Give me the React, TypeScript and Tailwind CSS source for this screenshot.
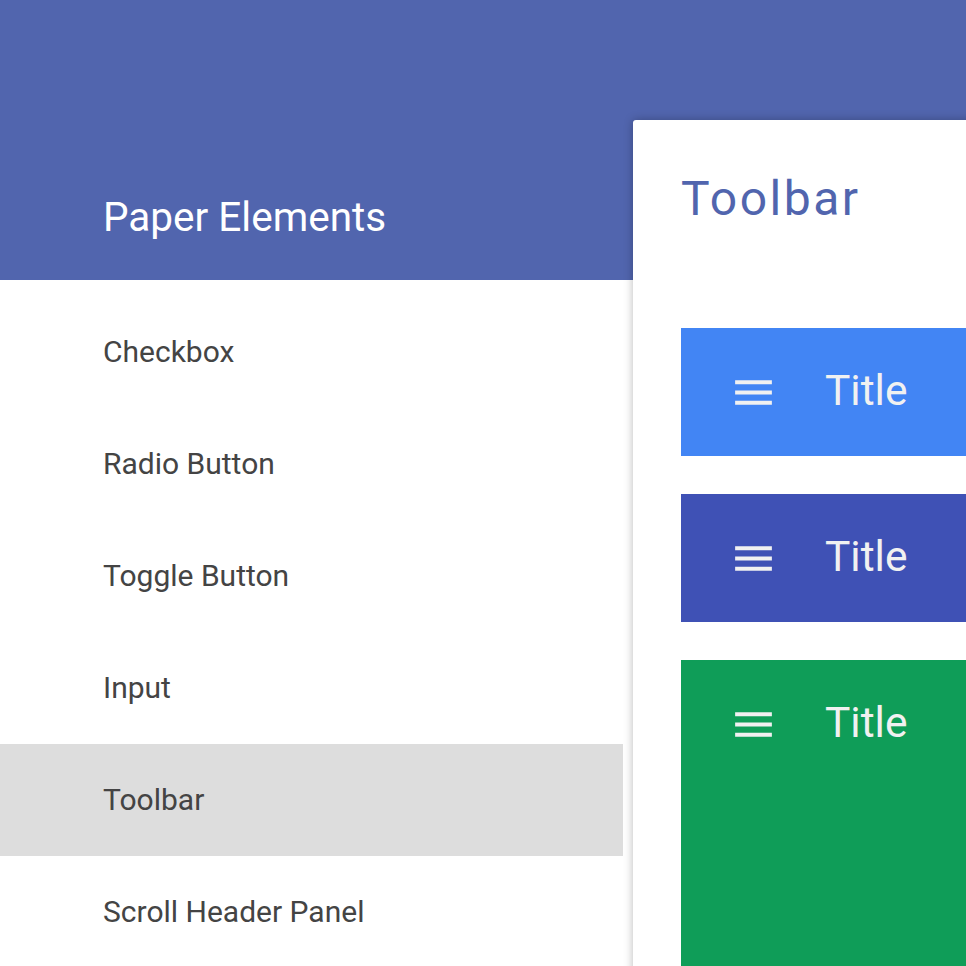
const navItems = [
  "Checkbox",
  "Radio Button",
  "Toggle Button",
  "Input",
  "Toolbar",
  "Scroll Header Panel",
];

const bars = [
  { color: "bg-[#4285f4]", tall: false },
  { color: "bg-[#3f51b5]", tall: false },
  { color: "bg-[#0f9d58]", tall: true },
];

// material "menu" glyph
const MenuIcon = () => (
  <svg width="49" height="49" viewBox="0 0 24 24" fill="#f1f1f1">
    <path d="M3 18h18v-2H3v2zm0-5h18v-2H3v2zm0-7v2h18V6H3z" />
  </svg>
);

const App = () => {
  return (
    <div className="w-[966px] h-[966px] overflow-hidden bg-white font-['Roboto','Liberation_Sans',sans-serif]">
      {/* header */}
      <div className="h-[280px] bg-[#5165ae] flex items-end">
        <h1 className="pl-[103px] pb-[39px] text-[40.5px] leading-[48px] text-white font-normal">
          Paper Elements
        </h1>
      </div>

      <div className="flex">
        {/* side nav */}
        <div className="w-[623px] shrink-0 pt-4">
          {navItems.map((item) => (
            <div
              key={item}
              className={
                "h-[112px] flex items-center pl-[103px] pb-[2px] text-[30px] text-[#444] " +
                (item === "Toolbar" ? "bg-[#dddddd]" : "")
              }
            >
              {item}
            </div>
          ))}
        </div>

        {/* page card */}
        <div className="ml-[10px] -mt-[160px] w-[700px] shrink-0 bg-white rounded-tl-[3px] shadow-[0_0_10px_rgba(0,0,0,0.28)] pl-12 pt-[49px]">
          <h2 className="text-[48px] leading-[60px] tracking-[2.5px] text-[#5165ae] font-normal">
            Toolbar
          </h2>
          <div className="mt-[99px] flex flex-col gap-[38px]">
            {bars.map((b, i) => (
              <div key={i} className={b.color + (b.tall ? " h-[400px]" : " h-[128px]")}>
                <div className="h-[128px] flex items-center pl-12">
                  <MenuIcon />
                  <span className="ml-[47px] pb-[3px] text-[42.5px] text-[#f1f1f1]">Title</span>
                </div>
              </div>
            ))}
          </div>
        </div>
      </div>
    </div>
  );
};

export default App;
